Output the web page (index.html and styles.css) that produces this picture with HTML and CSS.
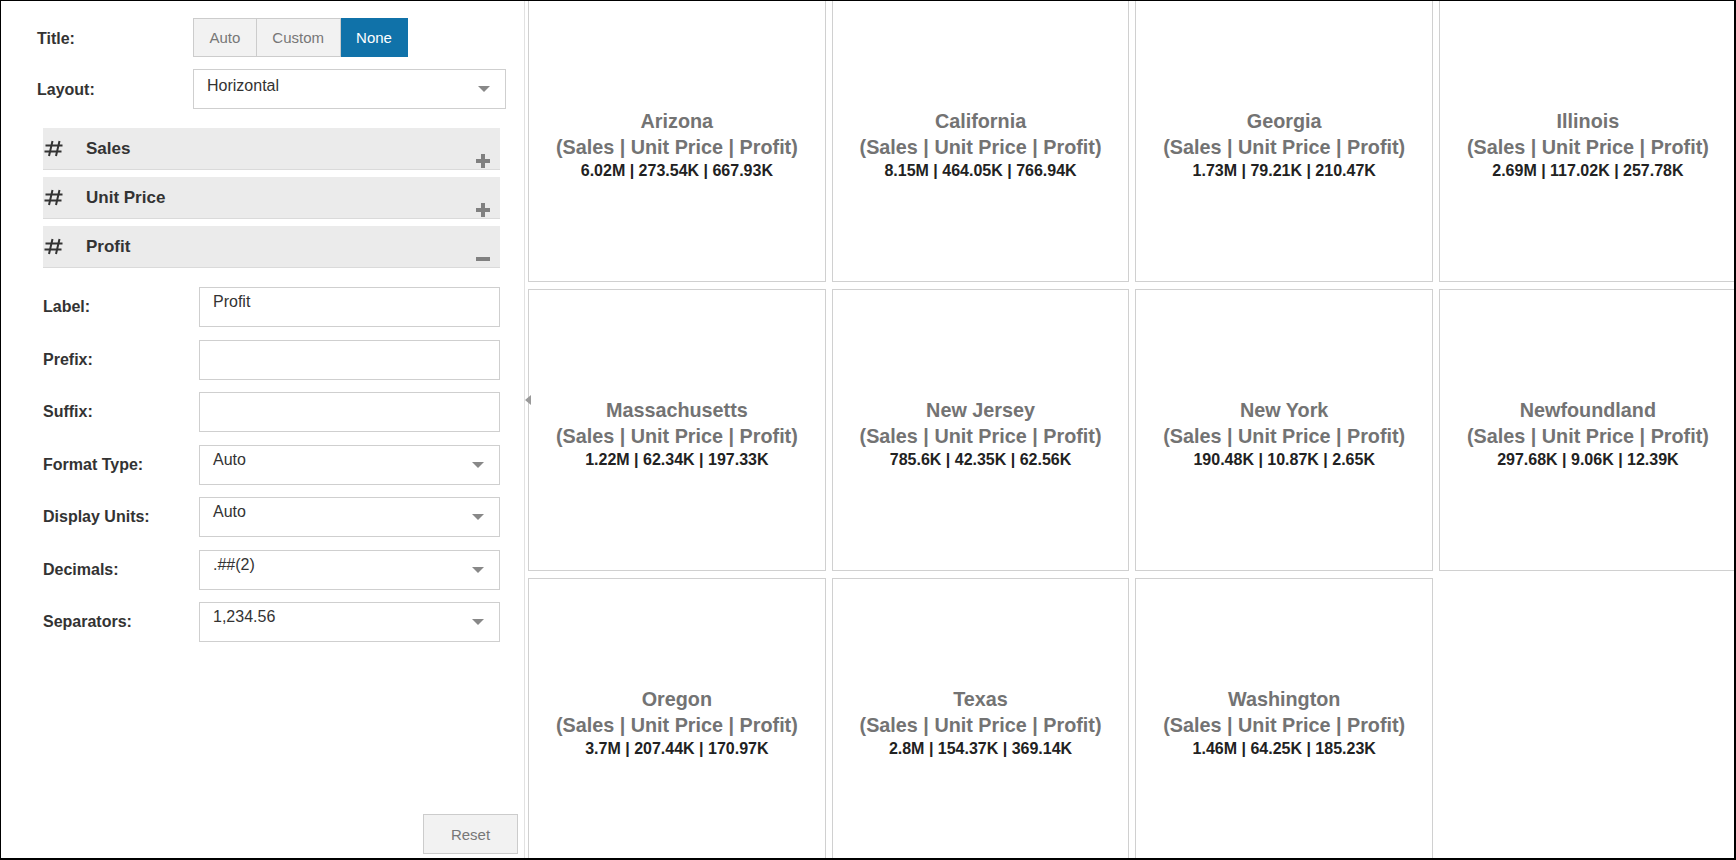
FILE: index.html
```html
<!DOCTYPE html>
<html lang="en">
<head>
<meta charset="utf-8">
<title>KPI Settings</title>
<link rel="stylesheet" href="styles.css">
</head>
<body>
<div class="frame">
  <aside class="panel">
    <div class="top-form">
      <div class="row">
        <span class="lbl">Title:</span>
        <div class="seg">
          <button class="seg-btn">Auto</button>
          <button class="seg-btn">Custom</button>
          <button class="seg-btn active">None</button>
        </div>
      </div>
      <div class="row">
        <span class="lbl">Layout:</span>
        <div class="select wide"><span class="val">Horizontal</span><i class="caret"></i></div>
      </div>
    </div>

    <div class="accordion">
      <div class="acc-head">
        <svg class="hash" viewBox="0 0 19 17"><path d="M8.5 1 L5 16 M15.5 1 L12 16 M1.5 5.5 H18.5 M0.5 11.5 H17.5" fill="none" stroke="#333" stroke-width="2"/></svg>
        <span class="acc-title">Sales</span>
        <svg class="toggle" viewBox="0 0 14 14"><rect x="0" y="5" width="14" height="4" fill="#808080"/><rect x="5" y="0" width="4" height="14" fill="#808080"/></svg>
      </div>
      <div class="acc-head">
        <svg class="hash" viewBox="0 0 19 17"><path d="M8.5 1 L5 16 M15.5 1 L12 16 M1.5 5.5 H18.5 M0.5 11.5 H17.5" fill="none" stroke="#333" stroke-width="2"/></svg>
        <span class="acc-title">Unit Price</span>
        <svg class="toggle" viewBox="0 0 14 14"><rect x="0" y="5" width="14" height="4" fill="#808080"/><rect x="5" y="0" width="4" height="14" fill="#808080"/></svg>
      </div>
      <div class="acc-head">
        <svg class="hash" viewBox="0 0 19 17"><path d="M8.5 1 L5 16 M15.5 1 L12 16 M1.5 5.5 H18.5 M0.5 11.5 H17.5" fill="none" stroke="#333" stroke-width="2"/></svg>
        <span class="acc-title">Profit</span>
        <svg class="toggle" viewBox="0 0 14 14"><rect x="0" y="5" width="14" height="4" fill="#808080"/></svg>
      </div>
    </div>

    <div class="form">
      <div class="row">
        <span class="lbl">Label:</span>
        <div class="select"><span class="val">Profit</span></div>
      </div>
      <div class="row">
        <span class="lbl">Prefix:</span>
        <div class="select"><span class="val"></span></div>
      </div>
      <div class="row">
        <span class="lbl">Suffix:</span>
        <div class="select"><span class="val"></span></div>
      </div>
      <div class="row">
        <span class="lbl">Format Type:</span>
        <div class="select"><span class="val">Auto</span><i class="caret"></i></div>
      </div>
      <div class="row">
        <span class="lbl">Display Units:</span>
        <div class="select"><span class="val">Auto</span><i class="caret"></i></div>
      </div>
      <div class="row">
        <span class="lbl">Decimals:</span>
        <div class="select"><span class="val">.##(2)</span><i class="caret"></i></div>
      </div>
      <div class="row">
        <span class="lbl">Separators:</span>
        <div class="select"><span class="val">1,234.56</span><i class="caret"></i></div>
      </div>
    </div>

    <div class="footer">
      <button class="reset">Reset</button>
    </div>
  </aside>

  <span class="collapse"></span>

  <main class="grid">
    <div class="card"><div class="kpi"><div class="kpi-title">Arizona</div><div class="kpi-sub">(Sales | Unit Price | Profit)</div><div class="kpi-val">6.02M | 273.54K | 667.93K</div></div></div>
    <div class="card"><div class="kpi"><div class="kpi-title">California</div><div class="kpi-sub">(Sales | Unit Price | Profit)</div><div class="kpi-val">8.15M | 464.05K | 766.94K</div></div></div>
    <div class="card"><div class="kpi"><div class="kpi-title">Georgia</div><div class="kpi-sub">(Sales | Unit Price | Profit)</div><div class="kpi-val">1.73M | 79.21K | 210.47K</div></div></div>
    <div class="card"><div class="kpi"><div class="kpi-title">Illinois</div><div class="kpi-sub">(Sales | Unit Price | Profit)</div><div class="kpi-val">2.69M | 117.02K | 257.78K</div></div></div>
    <div class="card"><div class="kpi"><div class="kpi-title">Massachusetts</div><div class="kpi-sub">(Sales | Unit Price | Profit)</div><div class="kpi-val">1.22M | 62.34K | 197.33K</div></div></div>
    <div class="card"><div class="kpi"><div class="kpi-title">New Jersey</div><div class="kpi-sub">(Sales | Unit Price | Profit)</div><div class="kpi-val">785.6K | 42.35K | 62.56K</div></div></div>
    <div class="card"><div class="kpi"><div class="kpi-title">New York</div><div class="kpi-sub">(Sales | Unit Price | Profit)</div><div class="kpi-val">190.48K | 10.87K | 2.65K</div></div></div>
    <div class="card"><div class="kpi"><div class="kpi-title">Newfoundland</div><div class="kpi-sub">(Sales | Unit Price | Profit)</div><div class="kpi-val">297.68K | 9.06K | 12.39K</div></div></div>
    <div class="card"><div class="kpi"><div class="kpi-title">Oregon</div><div class="kpi-sub">(Sales | Unit Price | Profit)</div><div class="kpi-val">3.7M | 207.44K | 170.97K</div></div></div>
    <div class="card"><div class="kpi"><div class="kpi-title">Texas</div><div class="kpi-sub">(Sales | Unit Price | Profit)</div><div class="kpi-val">2.8M | 154.37K | 369.14K</div></div></div>
    <div class="card"><div class="kpi"><div class="kpi-title">Washington</div><div class="kpi-sub">(Sales | Unit Price | Profit)</div><div class="kpi-val">1.46M | 64.25K | 185.23K</div></div></div>
  </main>
</div>
</body>
</html>
```

FILE: styles.css
```css
* { box-sizing: border-box; }

html, body {
  margin: 0;
  padding: 0;
  background: #fff;
}

body {
  font-family: "Liberation Sans", Arial, sans-serif;
  color: #333;
}

.frame {
  position: relative;
  width: 1736px;
  height: 860px;
  border-style: solid;
  border-color: #000;
  border-width: 1px 2px 2px 1px;
  display: flex;
  overflow: hidden;
}

/* ---------- left settings panel ---------- */
.panel {
  width: 524px;
  flex: none;
  border-right: 1px solid #e2e2e2;
  display: flex;
  flex-direction: column;
}

.top-form {
  padding: 17px 0 0 36px;
  display: flex;
  flex-direction: column;
  gap: 12px;
}

.row {
  display: flex;
  align-items: center;
}

.lbl {
  width: 156px;
  flex: none;
  font-size: 16px;
  font-weight: bold;
  color: #333;
}

.top-form .lbl { padding-top: 2px; }

.seg {
  display: flex;
  height: 39px;
}

.seg-btn {
  margin: 0;
  height: 39px;
  padding: 0 15.5px;
  font-family: "Liberation Sans", Arial, sans-serif;
  font-size: 15px;
  color: #777;
  background: #f2f2f2;
  border: 1px solid #cccccc;
}

.seg-btn + .seg-btn { border-left: none; }

.seg-btn.active {
  background: #1072a9;
  border-color: #1072a9;
  color: #fff;
}

.select {
  width: 301px;
  height: 40px;
  border: 1px solid #cfcfcf;
  background: #fff;
  display: flex;
  align-items: center;
  justify-content: space-between;
  padding: 0 15px 0 13px;
  font-size: 16px;
  line-height: 18px;
  color: #333;
}

.select .val {
  padding-bottom: 10px;
  min-height: 28px;
}

.select.wide { width: 313px; }
.select.wide .val { padding-bottom: 6px; min-height: 24px; }

.caret {
  width: 0;
  height: 0;
  border-left: 6px solid transparent;
  border-right: 6px solid transparent;
  border-top: 6px solid #888;
}

/* accordion */
.accordion {
  margin: 19px 0 0 42px;
  width: 457px;
  display: flex;
  flex-direction: column;
  gap: 7px;
}

.acc-head {
  height: 42px;
  background: #ebebeb;
  border-bottom: 1px solid #dadada;
  display: flex;
  align-items: center;
}

.hash {
  width: 19px;
  height: 17px;
  margin-left: 1px;
  flex: none;
}

.acc-title {
  margin-left: 23px;
  font-size: 17px;
  font-weight: bold;
  color: #333;
}

.toggle {
  width: 14px;
  height: 14px;
  margin-left: auto;
  margin-right: 10px;
  margin-bottom: 1px;
  align-self: flex-end;
  flex: none;
}

/* lower form */
.form {
  margin-top: 19px;
  padding-left: 42px;
  display: flex;
  flex-direction: column;
  gap: 12.5px;
}

.footer {
  margin-top: auto;
  display: flex;
  justify-content: flex-end;
  padding: 0 6px 4px 0;
}

.reset {
  width: 95px;
  height: 40px;
  margin: 0;
  border: 1px solid #cccccc;
  background: #f2f2f2;
  color: #777;
  font-family: "Liberation Sans", Arial, sans-serif;
  font-size: 15px;
}

.collapse {
  position: absolute;
  left: 524px;
  top: 394px;
  width: 0;
  height: 0;
  border-top: 5px solid transparent;
  border-bottom: 5px solid transparent;
  border-right: 6px solid #9a9a9a;
}

/* ---------- KPI grid ---------- */
.grid {
  flex: 1;
  margin-top: -1px;
  padding-left: 3px;
  display: grid;
  grid-template-columns: repeat(4, 297.7px);
  grid-auto-rows: 282px;
  column-gap: 6px;
  row-gap: 7px;
  align-content: start;
}

.card {
  border: 1px solid #d0d0d0;
  display: flex;
  align-items: center;
  justify-content: center;
  text-align: center;
}

.kpi { padding-top: 8px; }

.kpi-title,
.kpi-sub {
  font-size: 19.8px;
  line-height: 26px;
  font-weight: bold;
  color: #737373;
}

.kpi-val {
  font-size: 16px;
  line-height: 22px;
  font-weight: bold;
  color: #222;
}
```
